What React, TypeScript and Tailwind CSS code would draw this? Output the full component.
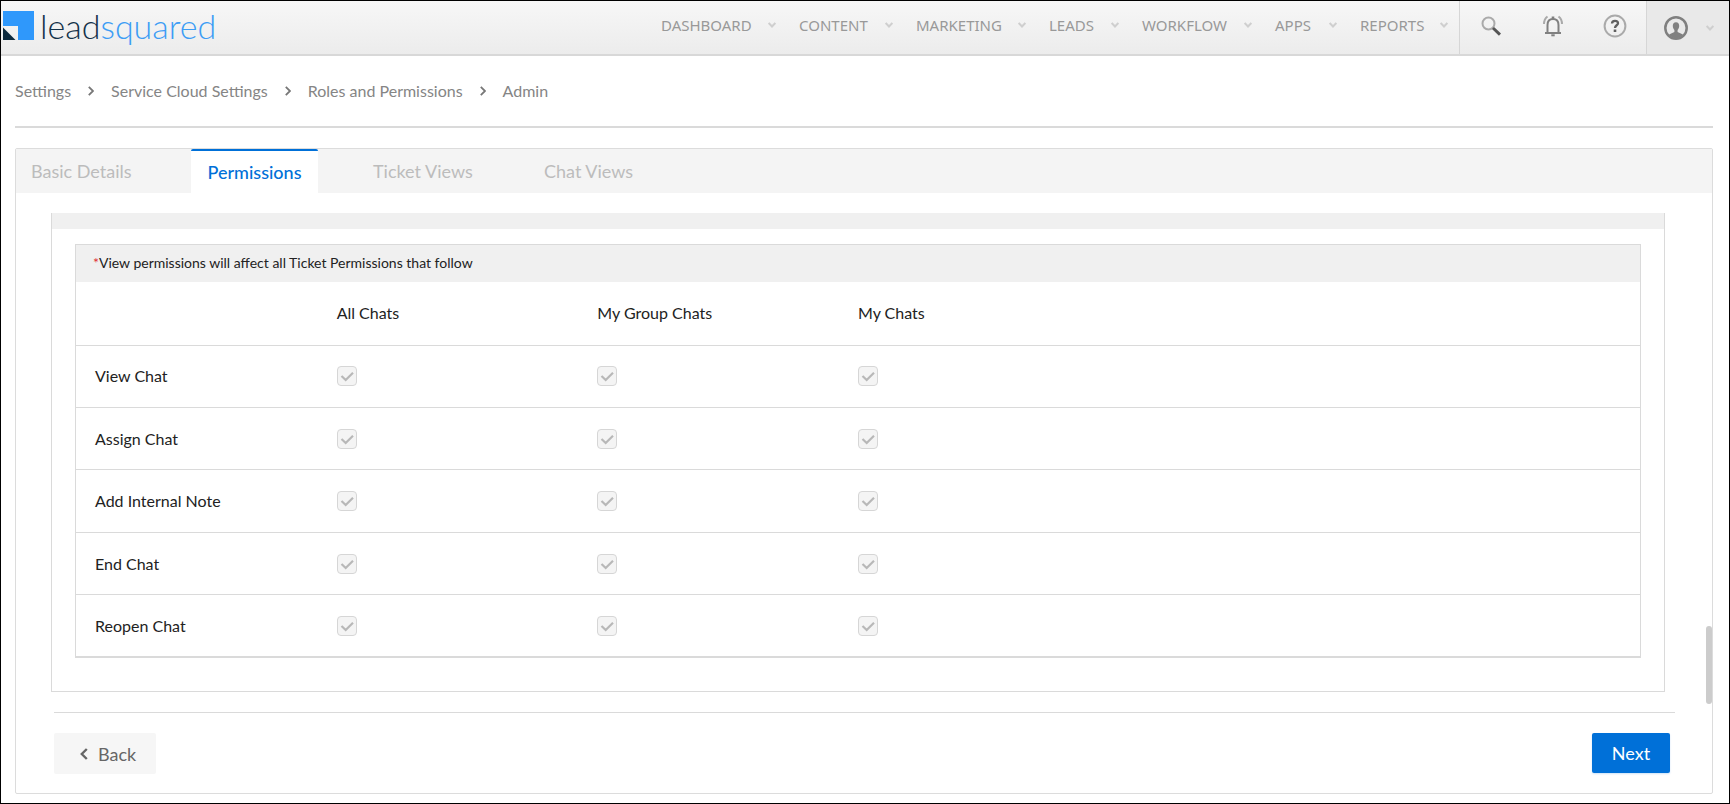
import { Fragment } from "react";

const navItems = [
  { label: "DASHBOARD", width: "w-[138px]" },
  { label: "CONTENT", width: "w-[117px]" },
  { label: "MARKETING", width: "w-[133px]" },
  { label: "LEADS", width: "w-[93px]" },
  { label: "WORKFLOW", width: "w-[133px]" },
  { label: "APPS", width: "w-[85px]" },
  { label: "REPORTS", width: "w-[99px]" },
];

const crumbs = ["Settings", "Service Cloud Settings", "Roles and Permissions", "Admin"];

const columns = ["All Chats", "My Group Chats", "My Chats"];
const permissions = ["View Chat", "Assign Chat", "Add Internal Note", "End Chat", "Reopen Chat"];

function SmallChevron() {
  return (
    <svg viewBox="0 0 8 6" className="w-2 h-1.5 shrink-0" fill="none" stroke="#cfcfcf" strokeWidth="2.1">
      <path d="M0.6 0.9 L4 4.5 L7.4 0.9" />
    </svg>
  );
}

function Logo() {
  return (
    <a href="#" aria-label="leadsquared" className="flex items-center pl-[2px] pb-1 gap-1.5">
      <svg viewBox="0 0 31 29" className="w-[31px] h-[29px] shrink-0">
        <path d="M0 0H31V29H15V15H0Z" fill="#2f98fb" />
        <path d="M0 16.5L12.5 29H0Z" fill="#0d2a3e" />
      </svg>
      <span className="text-[34px] leading-8 font-light text-[#14324a]">
        lead<span className="text-[#3d9df5]">squared</span>
      </span>
    </a>
  );
}

function Header() {
  return (
    <header className="flex justify-between h-[55px] border-b-2 border-[#d8d8d8] bg-linear-to-b from-[#f7f7f7] to-[#ececec]">
      <Logo />
      <div className="flex">
        <nav className="flex h-12 items-center font-['Noto_Sans','Open_Sans',sans-serif] text-[15px] text-[#999]">
          {navItems.map((item) => (
            <button key={item.label} className={`flex items-center justify-between pr-[23px] last:pr-[11px] ${item.width}`}>
              {item.label}
              <SmallChevron />
            </button>
          ))}
        </nav>
        <div className="flex items-center border-l border-[#d6d6d6] pb-1">
          <button aria-label="Search" className="w-[62px] flex justify-center">
            <svg viewBox="0 0 20 20" className="size-5" fill="none">
              <circle cx="7.5" cy="7.5" r="6" stroke="#aaa" strokeWidth="2" />
              <path d="M12 12L19 18.6" stroke="#555" strokeWidth="3" />
            </svg>
          </button>
          <button aria-label="Notifications" className="w-[62px] flex justify-center">
            <svg viewBox="0 0 20 22" className="w-5 h-[22px]" fill="none" stroke="#808080" strokeWidth="2">
              <path d="M2 18H18M4.5 18V10C4.5 6.5 6.5 4 10 4S15.5 6.5 15.5 10V18" />
              <path d="M10 1.5V4" strokeWidth="2.6" />
              <path d="M8.3 20.3H11.7" strokeWidth="2" />
              <path d="M1 9C1 5.5 2.5 3 4.5 1.5M19 9C19 5.5 17.5 3 15.5 1.5" stroke="#aaa" />
            </svg>
          </button>
          <button aria-label="Help" className="w-[62px] flex justify-center">
            <svg viewBox="0 0 24 24" className="size-6" fill="none">
              <circle cx="12" cy="12" r="10.4" stroke="#aaa" strokeWidth="2" />
              <path d="M9 9.6C9 7.8 10.2 6.9 12 6.9S15 7.9 15 9.3C15 11.3 12 11.3 12 14" stroke="#606060" strokeWidth="2.3" />
              <path d="M12 15.5V18" stroke="#606060" strokeWidth="2.6" />
            </svg>
          </button>
        </div>
        <button aria-label="Account" className="flex items-center gap-[18px] w-[83px] pl-[17px] border-l border-[#d6d6d6] bg-[#e9e9e9]">
          <svg viewBox="0 0 24 24" className="size-6 shrink-0" fill="none">
            <circle cx="12" cy="12" r="10.7" stroke="#808080" strokeWidth="2.5" />
            <path d="M12 6.2C9.8 6.2 8.8 7.8 8.8 9.8C8.8 11.8 9.6 13.2 10.4 14V16L5 18.5C6.8 21 9.2 22.3 12 22.3S17.2 21 19 18.5L13.6 16V14C14.4 13.2 15.2 11.8 15.2 9.8C15.2 7.8 14.2 6.2 12 6.2Z" fill="#808080" />
          </svg>
          <SmallChevron />
        </button>
      </div>
    </header>
  );
}

function Breadcrumbs() {
  return (
    <nav aria-label="Breadcrumb" className="flex items-center h-[72px] ml-[14px] mr-4 border-b-2 border-[#dadada] text-base text-[#858585]">
      {crumbs.map((crumb, i) => (
        <Fragment key={crumb}>
          {i > 0 && (
            <svg viewBox="0 0 6 10" className="w-1.5 h-2.5 mx-[17px]" fill="none" stroke="#777" strokeWidth="1.8">
              <path d="M0.8 0.8L5 5L0.8 9.2" />
            </svg>
          )}
          <a href="#">{crumb}</a>
        </Fragment>
      ))}
    </nav>
  );
}

function Tabs() {
  return (
    <div role="tablist" className="flex h-11 bg-[#f4f4f4] text-lg text-[#bcbcbc]">
      <button role="tab" aria-selected="false" className="w-[175px] pl-[15px] text-left">Basic Details</button>
      <button role="tab" aria-selected="true" className="w-[127px] border-t-2 border-[#0070d8] rounded-t-xs bg-white font-medium text-[#0070d8]">
        Permissions
      </button>
      <button role="tab" aria-selected="false" className="w-[171px] pl-[55px] text-left">Ticket Views</button>
      <button role="tab" aria-selected="false" className="w-[171px] pl-[55px] text-left">Chat Views</button>
    </div>
  );
}

function LockedCheckbox({ label }: { label: string }) {
  return (
    <span className="grid size-5">
      <input
        type="checkbox"
        checked
        disabled
        readOnly
        aria-label={label}
        className="col-start-1 row-start-1 size-5 appearance-none rounded border border-[#d6d6d6] bg-[#f4f4f4]"
      />
      <svg viewBox="0 0 20 20" className="col-start-1 row-start-1 size-5" fill="none" stroke="#b8b8b8" strokeWidth="2.2">
        <path d="M4.5 10L8.7 14L16 6.8" />
      </svg>
    </span>
  );
}

function PermissionTable() {
  return (
    <div className="border border-b-2 border-[#dadada]">
      <p className="h-[37px] pl-[17px] bg-[#f0f0f0] text-sm leading-9 text-[#222]">
        <span className="text-[#e0303a]">*</span>View permissions will affect all Ticket Permissions that follow
      </p>
      <table className="w-full h-[374px] table-fixed border-collapse text-base text-[#222]">
        <thead>
          <tr className="h-[63px] border-b border-[#dadada]">
            <td />
            {columns.map((col) => (
              <th key={col} scope="col" className="text-left font-normal">{col}</th>
            ))}
            <td colSpan={2} />
          </tr>
        </thead>
        <tbody>
          {permissions.map((name) => (
            <tr key={name} className="border-b border-[#dadada] last:border-b-0">
              <th scope="row" className="pl-[19px] text-left font-normal">{name}</th>
              {columns.map((col) => (
                <td key={col}>
                  <LockedCheckbox label={`${name}: ${col}`} />
                </td>
              ))}
              <td colSpan={2} />
            </tr>
          ))}
        </tbody>
      </table>
    </div>
  );
}

export default function App() {
  return (
    <div className="min-h-screen flex flex-col border border-black bg-white font-['Lato',sans-serif]">
      <Header />
      <Breadcrumbs />
      <main className="flex-1 flex flex-col ml-[14px] mr-4 mt-5 mb-[9px] border border-[#dcdcdc] rounded-xs">
        <Tabs />
        <div className="flex justify-between mt-5">
          <section className="flex-1 ml-[35px] border border-t-0 border-[#dadada]">
            <div className="h-4 bg-[#f0f0f0]" />
            <div className="px-[23px] pt-[15px] pb-[33px]">
              <PermissionTable />
            </div>
          </section>
          {/* scroll thumb */}
          <div className="flex flex-col justify-end w-[47px] items-end">
            <div className="w-1.5 h-[78px] -mb-3 rounded-full bg-[#ccc]" />
          </div>
        </div>
        <footer className="flex justify-between mt-5 ml-[38px] mr-[37px] pt-5 pr-[5px] border-t border-[#dadada] text-lg">
          <button className="flex items-center gap-2.5 h-[41px] w-[102px] pl-[26px] rounded-xs bg-[#f6f6f6] text-[#666]">
            <svg viewBox="0 0 8 12" className="w-2 h-3" fill="none" stroke="#666" strokeWidth="2.4">
              <path d="M6.8 1L1.8 6L6.8 11" />
            </svg>
            Back
          </button>
          <button className="h-10 w-[78px] rounded-xs bg-[#0070d8] text-white shadow-xs shadow-[#0070d8]/20">Next</button>
        </footer>
      </main>
    </div>
  );
}
